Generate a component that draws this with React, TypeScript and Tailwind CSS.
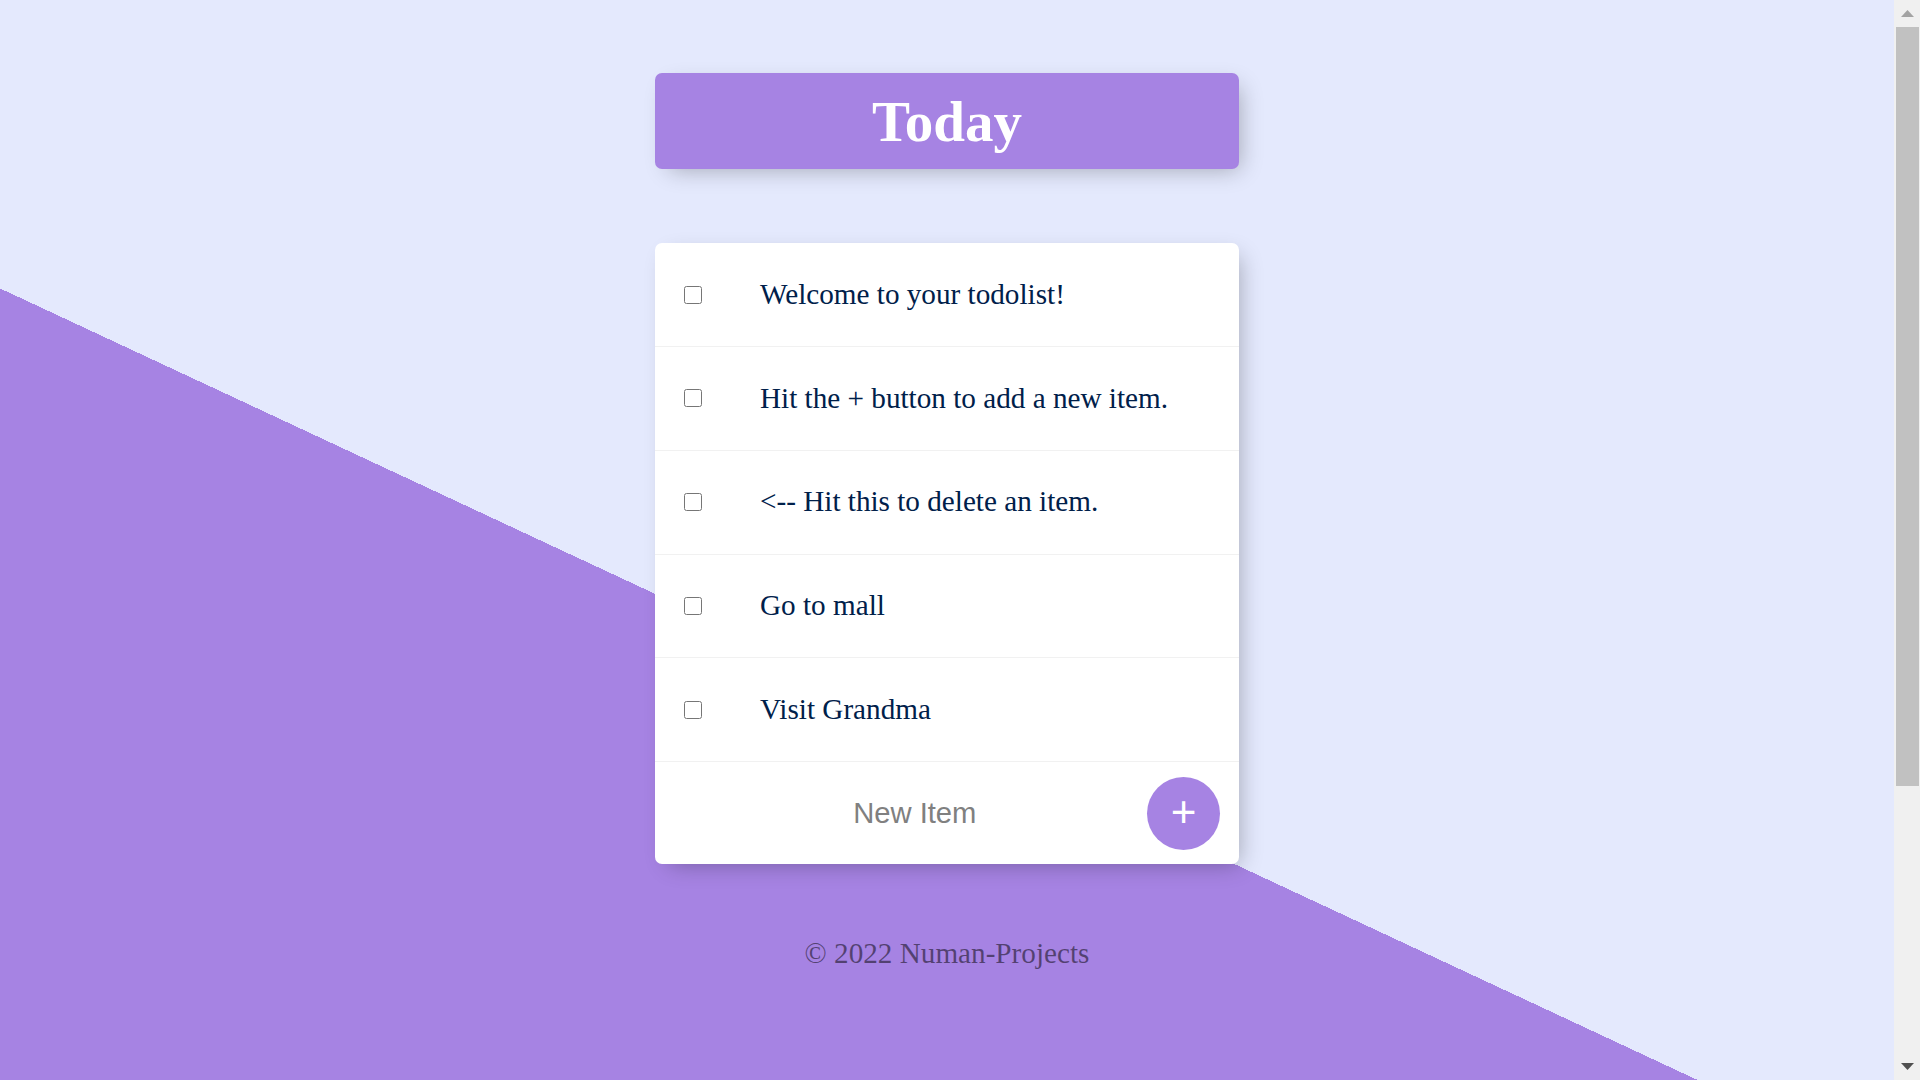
const items = [
  "Welcome to your todolist!",
  "Hit the + button to add a new item.",
  "<-- Hit this to delete an item.",
  "Go to mall",
  "Visit Grandma",
];

function Item({ text }: { text: string }) {
  return (
    <div className="flex h-[103.8px] items-center border-b border-[#F1F1F1]">
      <input
        type="checkbox"
        className="m-0 ml-[29px] mr-[29px] h-[18px] w-[18px] shrink-0 accent-[#A683E3]"
      />
      <p className="m-0 p-[29px] text-[29.2px] leading-[1.15] text-[#00204a]">{text}</p>
    </div>
  );
}

// page scrollbar as it appears in the screenshot
function Scrollbar() {
  return (
    <div className="flex h-screen w-[26px] shrink-0 flex-col bg-[#f0f0f0]">
      <div className="flex h-[27px] items-center justify-center">
        <svg width="13" height="7" viewBox="0 0 13 7">
          <polygon points="0,7 6.5,0 13,7" fill="#a3a3a3" />
        </svg>
      </div>
      <div className="ml-[2px] mr-[1px] h-[759px] bg-[#c1c1c1]" />
      <div className="flex-1" />
      <div className="flex h-[27px] items-center justify-center">
        <svg width="13" height="7" viewBox="0 0 13 7">
          <polygon points="0,0 13,0 6.5,7" fill="#505050" />
        </svg>
      </div>
    </div>
  );
}

export default function App() {
  return (
    <div className="flex h-screen overflow-hidden">
      <div className="h-screen flex-1 overflow-hidden">
        <div className="flex min-h-[1460px] flex-col items-center bg-[linear-gradient(25deg,#A683E3_50%,#E4E9FD_50%)] pt-[73px] font-['Liberation_Serif',serif]">
          <div className="w-[584px] rounded-[7px] bg-[#A683E3] shadow-[7px_7px_22px_-7px_rgba(0,0,0,0.3)]">
            <h1 className="py-[14.6px] text-center text-[57px] font-bold leading-[67px] text-white">Today</h1>
          </div>

          <div className="mt-[74px] w-[584px] rounded-[7px] bg-white shadow-[7px_7px_22px_-7px_rgba(0,0,0,0.3)]">
            {items.map((t) => (
              <Item key={t} text={t} />
            ))}
            <form
              className="flex h-[102px] items-center pl-[48px] pr-[19px]"
              onSubmit={(e) => e.preventDefault()}
            >
              <input
                type="text"
                placeholder="New Item"
                autoComplete="off"
                className="h-[87px] w-[409px] border-0 pl-[14.6px] text-center font-['Liberation_Sans',Arial,sans-serif] text-[29.2px] text-[#00204a] outline-none placeholder:text-[grey]"
              />
              <button
                type="submit"
                className="ml-auto flex h-[73px] w-[73px] items-center justify-center rounded-full bg-[#A683E3] pb-[3px] font-['Liberation_Sans',Arial,sans-serif] text-[44px] leading-none text-white"
              >
                +
              </button>
            </form>
          </div>

          <footer className="mt-[73px] text-center text-[29.2px] leading-[1.15] text-black/50">
            © 2022 Numan-Projects
          </footer>
        </div>
      </div>
      <Scrollbar />
    </div>
  );
}
